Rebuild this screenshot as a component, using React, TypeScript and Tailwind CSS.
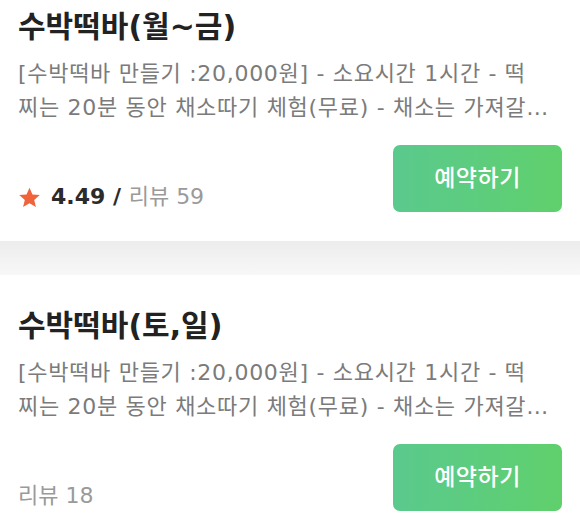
import React from "react";

interface Product {
  title: string;
  desc: string;
  rating?: number;
  reviews: number;
}

const products: Product[] = [
  {
    title: "수박떡바(월~금)",
    desc: "[수박떡바 만들기 :20,000원] - 소요시간 1시간 - 떡 찌는 20분 동안 채소따기 체험(무료) - 채소는 가져갈 수 있어요",
    rating: 4.49,
    reviews: 59,
  },
  {
    title: "수박떡바(토,일)",
    desc: "[수박떡바 만들기 :20,000원] - 소요시간 1시간 - 떡 찌는 20분 동안 채소따기 체험(무료) - 채소는 가져갈 수 있어요",
    reviews: 18,
  },
];

function Star() {
  return (
    <svg viewBox="0 0 24 24" className="w-[23px] h-[23px] shrink-0" fill="#f0643c">
      <path d="M12 1.8l3.1 7.1 7.6.6-5.8 5 1.8 7.5L12 18l-6.7 4 1.8-7.5-5.8-5 7.6-.6z" />
    </svg>
  );
}

function ProductCard({ item, first }: { item: Product; first?: boolean }) {
  return (
    <div className={`bg-white px-[18px] pb-[29px] ${first ? "pt-[9px]" : "pt-[33px]"}`}>
      <h2 className="text-[30px] leading-[36px] font-bold text-[#222]">{item.title}</h2>
      <p className="mt-[12px] pr-[12px] text-[22px] leading-[34px] text-[#7b7b7b] tracking-[0.7px] line-clamp-2">
        {item.desc}
      </p>
      <div className="mt-[20px] flex items-end justify-between">
        <div className="flex items-center gap-[10px] h-[30px] text-[22px]">
          {item.rating !== undefined && <Star />}
          <span className="leading-[30px]">
            {item.rating !== undefined && (
              <span className="font-bold text-[#2b2b2b]">{item.rating.toFixed(2)} / </span>
            )}
            <span className="text-[#9a9a9a]">리뷰 {item.reviews}</span>
          </span>
        </div>
        <button
          type="button"
          className="w-[169px] h-[67px] rounded-[7px] bg-gradient-to-r from-[#5ac98d] to-[#60d06c] text-white text-[23px] font-medium tracking-[0.5px]"
        >
          예약하기
        </button>
      </div>
    </div>
  );
}

export default function App() {
  return (
    <div
      className="w-[580px] h-[532px] overflow-hidden bg-white"
      style={{ fontFamily: '"DejaVu Sans", "Noto Sans CJK KR", sans-serif' }}
    >
      <ProductCard item={products[0]} first />
      <div className="h-[34px] bg-gradient-to-b from-[#ececec] to-[#f8f8f8]" />
      <ProductCard item={products[1]} />
    </div>
  );
}
